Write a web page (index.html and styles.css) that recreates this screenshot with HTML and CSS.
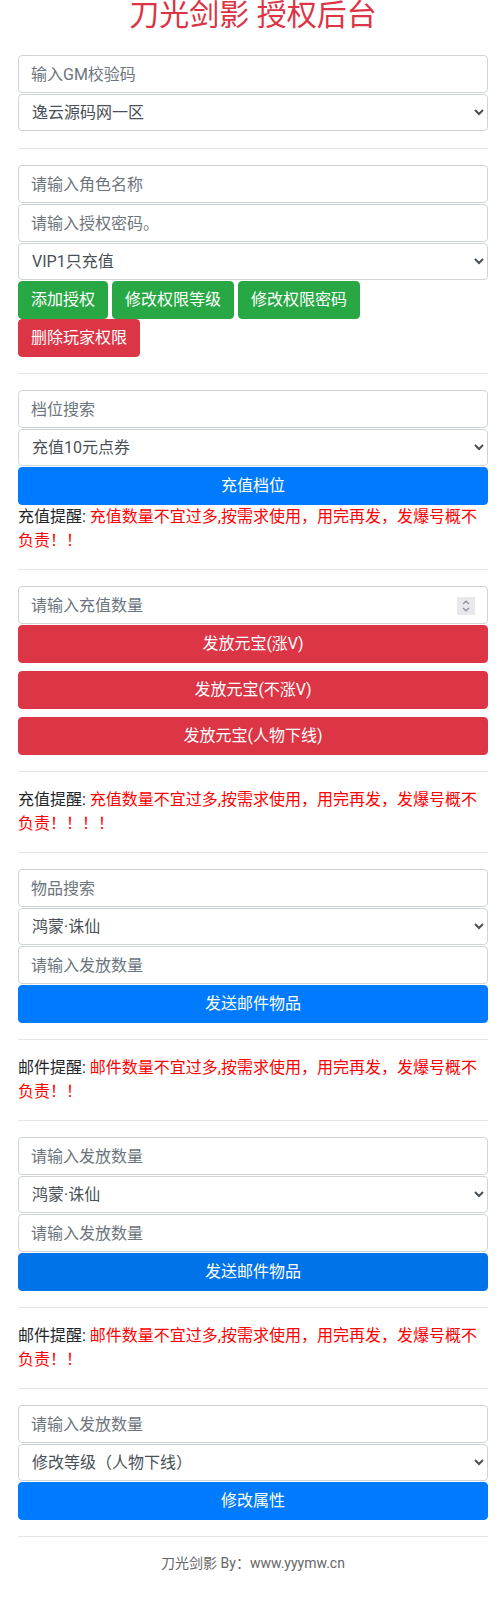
FILE: index.html
```html
<!DOCTYPE html>
<html lang="zh-CN">
<head>
<meta charset="utf-8">
<title>刀光剑影 授权后台</title>
<link rel="stylesheet" href="styles.css">
</head>
<body>
<div class="container">
  <h2 class="title">刀光剑影 授权后台</h2>

  <div class="group">
    <input class="form-control" type="text" placeholder="输入GM校验码">
    <select class="form-control"><option>逸云源码网一区</option></select>
  </div>
  <hr>

  <div class="group">
    <input class="form-control" type="text" placeholder="请输入角色名称">
    <input class="form-control" type="text" placeholder="请输入授权密码。">
    <select class="form-control"><option>VIP1只充值</option></select>
    <div class="btn-row">
      <button class="btn btn-success">添加授权</button>
      <button class="btn btn-success">修改权限等级</button>
      <button class="btn btn-success">修改权限密码</button>
    </div>
    <div class="btn-row">
      <button class="btn btn-danger">删除玩家权限</button>
    </div>
  </div>
  <hr>

  <div class="group">
    <input class="form-control" type="text" placeholder="档位搜索">
    <select class="form-control"><option>充值10元点券</option></select>
    <button class="btn btn-primary btn-block">充值档位</button>
    <p class="notice"><span class="label">充值提醒:</span> <span class="warn">充值数量不宜过多,按需求使用，用完再发，发爆号概不负责！！</span></p>
  </div>
  <hr>

  <div class="group">
    <div class="num-wrap">
      <input class="form-control num" type="number" placeholder="请输入充值数量">
      <svg class="spin" width="18" height="18" viewBox="0 0 18 18" aria-hidden="true">
        <rect width="18" height="18" fill="#e9e9ed"/>
        <path d="M6 7 L9 4.2 L12 7" fill="none" stroke="#8f8f9d" stroke-width="1.3"/>
        <path d="M6 11 L9 13.8 L12 11" fill="none" stroke="#8f8f9d" stroke-width="1.3"/>
      </svg>
    </div>
    <button class="btn btn-danger btn-block">发放元宝(涨V)</button>
    <button class="btn btn-danger btn-block">发放元宝(不涨V)</button>
    <button class="btn btn-danger btn-block">发放元宝(人物下线)</button>
  </div>
  <hr>

  <p class="notice"><span class="label">充值提醒:</span> <span class="warn">充值数量不宜过多,按需求使用，用完再发，发爆号概不负责！！！！</span></p>
  <hr>

  <div class="group">
    <input class="form-control" type="text" placeholder="物品搜索">
    <select class="form-control"><option>鸿蒙·诛仙</option></select>
    <input class="form-control" type="text" placeholder="请输入发放数量">
    <button class="btn btn-primary btn-block">发送邮件物品</button>
  </div>
  <hr>

  <p class="notice"><span class="label">邮件提醒:</span> <span class="warn">邮件数量不宜过多,按需求使用，用完再发，发爆号概不负责！！</span></p>
  <hr>

  <div class="group">
    <input class="form-control" type="text" placeholder="请输入发放数量">
    <select class="form-control"><option>鸿蒙·诛仙</option></select>
    <input class="form-control" type="text" placeholder="请输入发放数量">
    <button class="btn btn-primary btn-block btn-hover">发送邮件物品</button>
  </div>
  <hr>

  <p class="notice"><span class="label">邮件提醒:</span> <span class="warn">邮件数量不宜过多,按需求使用，用完再发，发爆号概不负责！！</span></p>
  <hr>

  <div class="group">
    <input class="form-control" type="text" placeholder="请输入发放数量">
    <select class="form-control"><option>修改等级（人物下线）</option></select>
    <button class="btn btn-primary btn-block">修改属性</button>
  </div>
  <hr>

  <p class="footer">刀光剑影 By：www.yyymw.cn</p>
</div>
</body>
</html>
```

FILE: styles.css
```css
* {
  box-sizing: border-box;
}

html, body {
  margin: 0;
  padding: 0;
  background: #fff;
}

body {
  font-family: Roboto, "Noto Sans CJK SC", sans-serif;
  font-size: 16px;
  line-height: 1.5;
  color: #212529;
}

.container {
  padding: 0 10px 0 18px;
}

.title {
  margin: 0 0 25px;
  font-size: 30px;
  font-weight: 400;
  line-height: 30px;
  text-align: center;
  color: #dc3545;
}

.group {
  display: flex;
  flex-direction: column;
}

.form-control {
  display: block;
  width: 100%;
  height: 38px;
  padding: 6px 12px;
  font-family: Roboto, "Noto Sans CJK SC", sans-serif;
  font-size: 16px;
  line-height: 1.5;
  color: #495057;
  background: #fff;
  border: 1px solid #ced4da;
  border-radius: 4px;
  margin: 0 0 1px;
}

.form-control::placeholder {
  color: #6c757d;
  opacity: 1;
}

select.form-control {
  height: 37px;
  padding: 5px 12px 5px 9px;
}

.num-wrap {
  position: relative;
}

.num::-webkit-inner-spin-button,
.num::-webkit-outer-spin-button {
  -webkit-appearance: none;
  margin: 0;
}

.num {
  -moz-appearance: textfield;
}

.spin {
  position: absolute;
  right: 13px;
  top: 11px;
}

.btn-row {
  display: flex;
  gap: 4px;
}

.btn {
  display: inline-block;
  padding: 6px 12px;
  font-family: Roboto, "Noto Sans CJK SC", sans-serif;
  font-size: 16px;
  line-height: 1.5;
  font-weight: 400;
  color: #fff;
  text-align: center;
  border: 1px solid transparent;
  border-radius: 4px;
  cursor: pointer;
  margin: 0;
}

.btn-success {
  background: #28a745;
  border-color: #28a745;
}

.btn-danger {
  background: #dc3545;
  border-color: #dc3545;
}

.btn-primary {
  background: #007bff;
  border-color: #007bff;
}

.btn-hover {
  background: #0073e9;
  border-color: #0073e9;
}

.btn-block {
  display: block;
  width: 100%;
}

.btn-block + .btn-block {
  margin-top: 8px;
}

hr {
  margin: 16px 0;
  border: 0;
  border-top: 1px solid rgba(0, 0, 0, 0.1);
  height: 0;
}

.notice {
  margin: 0 0 16px;
  font-size: 16px;
  line-height: 24px;
}

.group .notice {
  margin: 0;
}

.label {
  color: #212529;
}

.warn {
  color: #ff0000;
}

.footer {
  margin: 0 0 16px;
  text-align: center;
  font-size: 14px;
  line-height: 21px;
  color: #666;
}
```
